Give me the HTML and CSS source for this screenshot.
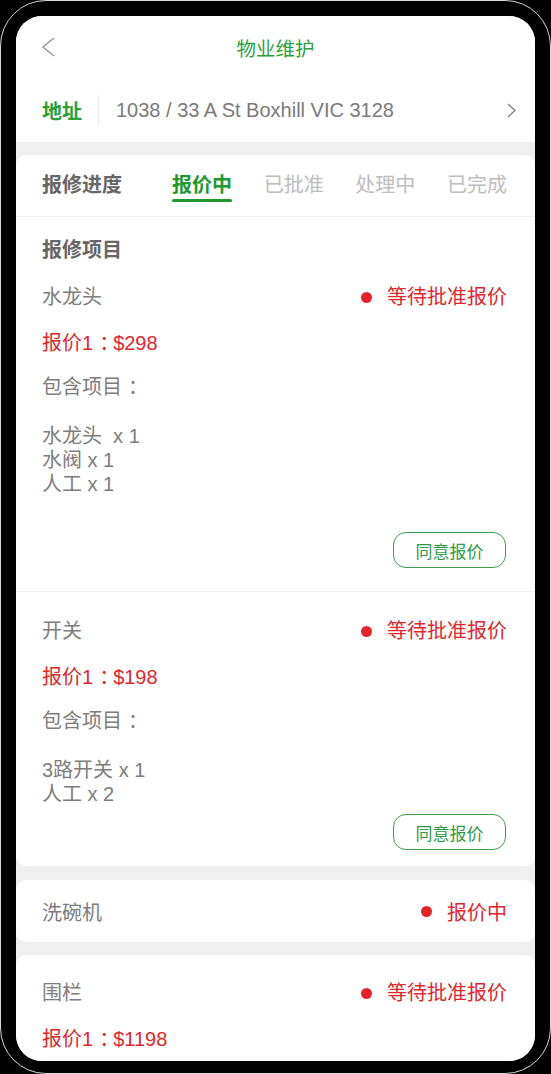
FILE: index.html
```html
<!DOCTYPE html>
<html lang="zh-CN">
<head>
    <meta charset="UTF-8">
    <meta name="viewport" content="width=device-width, initial-scale=1.0">
    <title>物业维护</title>
    <link rel="stylesheet" href="styles.css">
</head>
<body>

    <div class="phone">
        <div class="screen">

            <header class="topbar">
                <svg class="back" width="14" height="20" viewBox="0 0 14 20">
                    <polyline points="13,1 2,10 13,19" fill="none" stroke="#999" stroke-width="1.5"/>
                </svg>
                <h1 class="title">物业维护</h1>
                <span></span>
            </header>

            <div class="address">
                <span class="address-label">地址</span>
                <span class="address-line"></span>
                <span class="address-text">1038 / 33 A St Boxhill VIC 3128</span>
                <svg class="chevron" width="9" height="15" viewBox="0 0 9 15">
                    <polyline points="1,1 8,7.5 1,14" fill="none" stroke="#888" stroke-width="1.5"/>
                </svg>
            </div>

            <!-- progress + quoted items -->
            <section class="card">
                <div class="progress">
                    <span class="progress-label">报修进度</span>
                    <div class="steps">
                        <span class="step active">报价中</span>
                        <span class="step">已批准</span>
                        <span class="step">处理中</span>
                        <span class="step">已完成</span>
                    </div>
                </div>

                <div class="section-title">报修项目</div>

                <div class="item first">
                    <div class="item-head">
                        <span class="item-name">水龙头</span>
                        <span class="status"><i class="dot"></i>等待批准报价</span>
                    </div>
                    <div class="price">报价1<span class="colon">：</span>$298</div>
                    <div class="includes">包含项目<span class="colon">：</span></div>
                    <div class="parts">
                        <div>水龙头&nbsp; x 1</div>
                        <div>水阀 x 1</div>
                        <div>人工 x 1</div>
                    </div>
                    <div class="actions">
                        <button class="agree">同意报价</button>
                    </div>
                </div>

                <div class="item last">
                    <div class="item-head">
                        <span class="item-name">开关</span>
                        <span class="status"><i class="dot"></i>等待批准报价</span>
                    </div>
                    <div class="price">报价1<span class="colon">：</span>$198</div>
                    <div class="includes">包含项目<span class="colon">：</span></div>
                    <div class="parts">
                        <div>3路开关 x 1</div>
                        <div>人工 x 2</div>
                    </div>
                    <div class="actions tight">
                        <button class="agree">同意报价</button>
                    </div>
                </div>
            </section>

            <section class="card single">
                <span class="item-name">洗碗机</span>
                <span class="status"><i class="dot"></i>报价中</span>
            </section>

            <section class="card">
                <div class="item open">
                    <div class="item-head">
                        <span class="item-name">围栏</span>
                        <span class="status"><i class="dot"></i>等待批准报价</span>
                    </div>
                    <div class="price">报价1<span class="colon">：</span>$1198</div>
                </div>
            </section>

        </div>
    </div>

</body>
</html>
```

FILE: styles.css
```css
body {
    margin: 0;
    background-color: #000;
    font-family: 'Liberation Sans', 'Noto Sans CJK SC', sans-serif;
    font-size: 20px;
    color: #7d7d7d;
}

.phone {
    box-sizing: border-box;
    width: 551px;
    height: 1074px;
    padding: 15px 15px 12px;
    border: 1px solid #d6d6d6;
    border-radius: 46px;
    background-color: #000;
}

.screen {
    height: 1045px;
    border-radius: 26px;
    background-color: #efefef;
    overflow: hidden;
}

/* top bar */
.topbar {
    display: grid;
    grid-template-columns: 1fr auto 1fr;
    align-items: center;
    height: 62px;
    padding: 0 25px;
    background-color: #fff;
}

.title {
    margin: 0;
    font-size: 19.5px;
    font-weight: normal;
    color: #2c9f3c;
}

.address {
    display: flex;
    align-items: center;
    height: 64px;
    padding: 0 19px 0 26px;
    background-color: #fff;
}

.address-label {
    font-weight: bold;
    color: #27a03a;
}

.address-line {
    width: 1px;
    height: 30px;
    margin: 0 17px 0 16px;
    background-color: #ececec;
}

.address-text {
    flex: 1;
    color: #7a7a7a;
}

/* cards */
.card {
    margin-top: 13px;
    background-color: #fff;
    border-radius: 10px;
}

.card + .card {
    margin-top: 14px;
}

.card.single + .card {
    margin-top: 13px;
}

.progress {
    display: flex;
    align-items: flex-start;
    height: 43px;
    padding: 18px 28px 0 26px;
    border-bottom: 1px solid #f1f1f1;
    line-height: 24px;
}

.progress-label {
    font-weight: bold;
    color: #666;
}

.steps {
    flex: 1;
    display: flex;
    justify-content: space-between;
    margin-left: 50px;
}

.step {
    color: #bdbdbd;
}

.step.active {
    font-weight: bold;
    color: #21992f;
}

.step.active::after {
    content: "";
    display: block;
    height: 3px;
    margin-top: 2px;
    border-radius: 2px;
    background-color: #21992f;
}

.section-title {
    padding: 21px 26px 0;
    line-height: 24px;
    font-weight: bold;
    color: #666;
}

.item {
    padding: 27px 28px 16px 26px;
    line-height: 24px;
}

.item.first {
    padding-top: 23px;
    padding-bottom: 23px;
    border-bottom: 1px solid #f1f1f1;
}

.item.open {
    padding-top: 26px;
    padding-bottom: 40px;
}

.item-head {
    display: flex;
    justify-content: space-between;
    align-items: center;
}

.status {
    display: flex;
    align-items: center;
    color: #e0272d;
}

.dot {
    width: 11px;
    height: 11px;
    margin-right: 15px;
    border-radius: 50%;
    background-color: #e3252b;
}

.price {
    margin-top: 22px;
    color: #e0272d;
}

/* full-width colon sits in the middle of its cell on the phone */
.colon {
    margin-left: 0.3em;
    letter-spacing: -0.3em;
}

.includes {
    margin-top: 20px;
}

.parts {
    margin-top: 25px;
}

.actions {
    display: flex;
    justify-content: flex-end;
    margin-top: 36px;
}

.actions.tight {
    margin-top: 8px;
}

.agree {
    width: 113px;
    height: 36px;
    margin-right: 1px;
    padding: 0;
    border: 1px solid #3ba04a;
    border-radius: 13px;
    background-color: #fff;
    font-family: 'Liberation Sans', 'Noto Sans CJK SC', sans-serif;
    font-size: 17px;
    color: #2f9a3f;
}

.card.single {
    display: flex;
    justify-content: space-between;
    align-items: center;
    height: 62px;
    padding: 0 28px 0 26px;
}
```
